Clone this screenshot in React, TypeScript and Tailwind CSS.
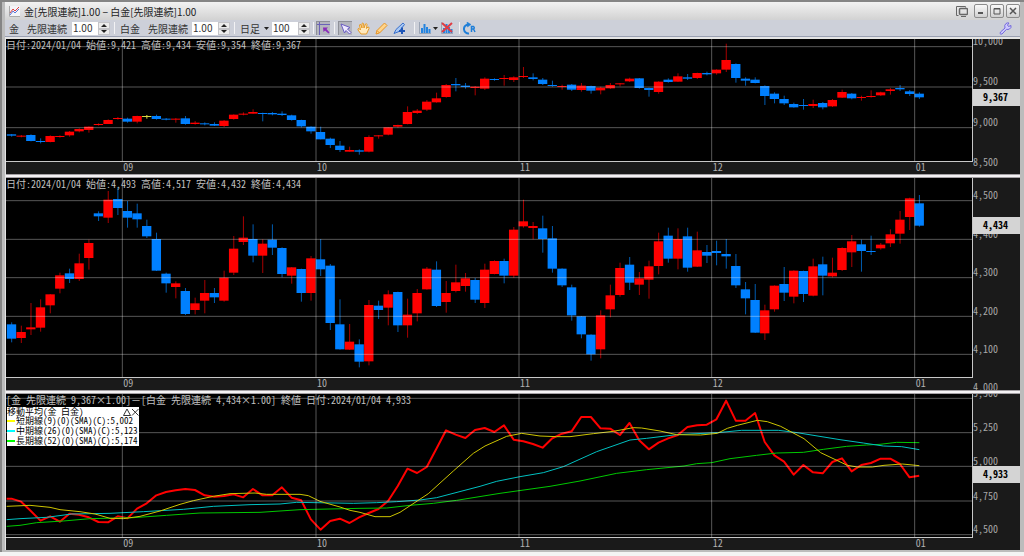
import type { ReactNode } from 'react';

type Candle = [string, number, number, number, number];
type Point = [number, number];

// Plot units: three per pixel at the default window width.
const PLOT_LEFT = 18;
const PLOT_WIDTH = 2898;

const candleX = (index: number) => 34.5 + index * 28.97;

const months = [
  { label: '09', x: 367 },
  { label: '10', x: 948 },
  { label: '11', x: 1557 },
  { label: '12', x: 2135 },
  { label: '01', x: 2744 },
];

// [colour, high, body top, body bottom, low]
const goldCandles: Candle[] = [
  ['b', 294, 295, 299, 302], ['r', 297, 299, 302, 304], ['b', 295, 297, 315, 316], ['b', 307, 315, 318, 322],
  ['r', 298, 300, 318, 319], ['r', 298, 300, 303, 305], ['r', 285, 287, 298, 302], ['r', 277, 279, 286, 289],
  ['r', 271, 272, 282, 290], ['r', 262, 264, 267, 269], ['r', 250, 252, 264, 264], ['r', 243, 246, 249, 251],
  ['b', 245, 248, 257, 260], ['r', 239, 240, 257, 262], ['y', 237, 240, 243, 248], ['b', 236, 240, 249, 251],
  ['b', 246, 248, 251, 253], ['r', 246, 248, 251, 260], ['b', 240, 247, 264, 266], ['r', 255, 260, 264, 266],
  ['b', 259, 262, 265, 268], ['b', 259, 264, 269, 270], ['r', 252, 254, 270, 273], ['r', 235, 236, 249, 251],
  ['r', 229, 233, 236, 238], ['r', 220, 228, 233, 233], ['b', 230, 231, 234, 256], ['b', 228, 231, 235, 238],
  ['b', 226, 233, 237, 240], ['b', 236, 238, 252, 254], ['b', 251, 252, 271, 274], ['b', 271, 272, 286, 293],
  ['b', 272, 288, 310, 310], ['b', 305, 308, 327, 336], ['b', 315, 329, 342, 348], ['r', 332, 342, 347, 347],
  ['b', 340, 343, 347, 356], ['r', 298, 303, 347, 349], ['r', 297, 298, 301, 308], ['r', 274, 274, 296, 298],
  ['r', 266, 267, 272, 275], ['r', 211, 228, 264, 265], ['r', 219, 224, 231, 234], ['r', 192, 197, 221, 225],
  ['r', 170, 187, 199, 200], ['r', 144, 147, 183, 185], ['b', 126, 144, 148, 166], ['b', 141, 149, 153, 158],
  ['r', 150, 152, 156, 178], ['r', 124, 128, 158, 162], ['b', 127, 129, 132, 134], ['r', 117, 126, 129, 149],
  ['r', 121, 124, 132, 138], ['r', 93, 120, 123, 126], ['b', 112, 124, 129, 133], ['b', 126, 131, 144, 147],
  ['b', 134, 147, 150, 152], ['r', 146, 150, 153, 161], ['b', 144, 146, 161, 165], ['r', 141, 149, 162, 167],
  ['b', 149, 150, 164, 173], ['r', 152, 155, 163, 175], ['r', 141, 147, 157, 159], ['r', 141, 142, 145, 151],
  ['r', 125, 128, 136, 138], ['b', 126, 127, 156, 158], ['b', 155, 156, 162, 182], ['r', 136, 137, 168, 173],
  ['b', 127, 131, 138, 140], ['r', 112, 121, 137, 138], ['b', 114, 124, 128, 132], ['r', 110, 111, 126, 129],
  ['b', 107, 111, 115, 118], ['r', 100, 101, 112, 116], ['r', 23, 72, 101, 108], ['b', 82, 84, 126, 140],
  ['b', 124, 128, 134, 149], ['b', 124, 131, 141, 142], ['b', 148, 150, 180, 207], ['b', 169, 173, 189, 202],
  ['b', 179, 189, 202, 207], ['b', 200, 204, 214, 215], ['b', 189, 207, 210, 221], ['r', 191, 204, 210, 216],
  ['b', 198, 201, 214, 220], ['r', 189, 192, 211, 213], ['r', 161, 168, 185, 186], ['b', 171, 173, 187, 190],
  ['r', 179, 183, 186, 194], ['r', 163, 180, 183, 185], ['r', 167, 169, 178, 180], ['r', 156, 160, 165, 176],
  ['b', 147, 156, 160, 165], ['b', 162, 166, 174, 180], ['b', 169, 173, 184, 189],
];

const platinumCandles: Candle[] = [
  ['b', 445, 451, 494, 505], ['r', 455, 474, 492, 507], ['r', 387, 460, 466, 483], ['r', 376, 400, 461, 473],
  ['r', 360, 361, 394, 418], ['r', 296, 304, 344, 358], ['b', 284, 298, 315, 327], ['r', 239, 268, 315, 321],
  ['r', 197, 207, 252, 287], ['b', 112, 118, 127, 141], ['r', 51, 77, 131, 147], ['b', 39, 75, 102, 123],
  ['b', 81, 111, 131, 161], ['b', 89, 118, 136, 161], ['b', 137, 156, 187, 192], ['b', 176, 195, 290, 291],
  ['b', 296, 299, 328, 356], ['r', 322, 328, 339, 373], ['b', 342, 351, 420, 423], ['r', 371, 388, 408, 421],
  ['r', 318, 357, 380, 418], ['b', 342, 357, 370, 387], ['r', 290, 311, 380, 383], ['r', 186, 224, 296, 303],
  ['r', 127, 191, 204, 213], ['b', 151, 195, 245, 265], ['r', 196, 209, 245, 297], ['b', 151, 197, 221, 243],
  ['b', 220, 222, 300, 310], ['r', 279, 280, 305, 329], ['b', 284, 285, 357, 383], ['r', 246, 253, 357, 380],
  ['b', 195, 256, 286, 306], ['b', 270, 275, 447, 468], ['b', 376, 451, 526, 527], ['r', 450, 503, 527, 528],
  ['b', 496, 511, 563, 580], ['r', 378, 393, 562, 574], ['b', 380, 395, 408, 435], ['r', 349, 361, 401, 454],
  ['b', 353, 354, 454, 474], ['r', 374, 422, 454, 491], ['r', 345, 357, 418, 442], ['r', 279, 284, 346, 347],
  ['b', 262, 287, 396, 399], ['r', 321, 357, 384, 416], ['r', 272, 325, 351, 355], ['r', 297, 313, 336, 353],
  ['b', 312, 318, 377, 387], ['r', 269, 287, 387, 402], ['r', 259, 261, 300, 301], ['b', 254, 261, 305, 328],
  ['r', 159, 167, 305, 311], ['r', 77, 142, 157, 161], ['r', 144, 156, 162, 196], ['b', 125, 163, 195, 236],
  ['b', 156, 193, 284, 296], ['b', 283, 284, 334, 339], ['b', 332, 340, 424, 440], ['b', 426, 427, 481, 493],
  ['b', 481, 482, 541, 560], ['r', 409, 424, 526, 553], ['r', 332, 364, 406, 430], ['r', 266, 282, 363, 368],
  ['b', 249, 272, 326, 348], ['r', 294, 313, 332, 363], ['r', 260, 277, 317, 374], ['r', 176, 202, 276, 301],
  ['b', 161, 185, 254, 266], ['r', 163, 195, 254, 286], ['b', 161, 187, 281, 293], ['r', 173, 229, 278, 279],
  ['b', 213, 234, 245, 267], ['b', 200, 231, 237, 274], ['b', 195, 240, 247, 284], ['b', 240, 276, 334, 342],
  ['b', 324, 346, 373, 421], ['b', 330, 378, 476, 477], ['r', 392, 409, 478, 498], ['r', 334, 335, 406, 413],
  ['b', 279, 330, 356, 381], ['r', 289, 290, 368, 388], ['b', 290, 291, 360, 384], ['r', 254, 277, 365, 367],
  ['b', 248, 271, 305, 364], ['r', 251, 296, 307, 310], ['r', 220, 222, 288, 291], ['r', 183, 202, 235, 279],
  ['b', 197, 211, 231, 293], ['b', 185, 231, 234, 243], ['r', 207, 212, 223, 227], ['r', 166, 181, 208, 219],
  ['r', 111, 137, 179, 209], ['r', 71, 73, 129, 168], ['b', 63, 88, 155, 158],
];

const spread = [
  338, 347, 375, 404, 391, 407, 383, 386, 394, 408, 409, 391, 397, 368, 352, 328, 318, 313, 309, 312, 328, 332, 330,
  325, 334, 309, 328, 328, 304, 335, 343, 400, 431, 405, 398, 411, 394, 381, 369, 345, 300, 248, 261, 243, 188, 133,
  146, 156, 132, 126, 138, 118, 161, 166, 174, 185, 157, 143, 136, 93, 93, 127, 128, 147, 111, 163, 190, 170, 157,
  147, 123, 118, 116, 100, 44, 104, 104, 81, 168, 208, 227, 266, 237, 259, 262, 228, 217, 256, 237, 231, 218, 218,
  234, 274, 269,
];

const shortAverage: Point[] = [
  [20, 361], [90, 358], [150, 364], [180, 371], [240, 377], [285, 384], [330, 397], [370, 398], [420, 391],
  [480, 375], [540, 355], [580, 344], [640, 331], [690, 323], [765, 321], [800, 325], [900, 325], [925, 329],
  [960, 346], [1020, 363], [1050, 373], [1080, 379], [1125, 392], [1170, 392], [1200, 379], [1285, 323],
  [1360, 255], [1420, 202], [1455, 180], [1520, 151], [1565, 142], [1620, 150], [1670, 152], [1710, 152],
  [1780, 143], [1840, 136], [1900, 125], [1925, 126], [1980, 135], [2030, 146], [2102, 147], [2152, 142],
  [2182, 127], [2212, 118], [2272, 103], [2302, 107], [2342, 121], [2412, 158], [2462, 200], [2542, 238],
  [2572, 243], [2617, 243], [2652, 238], [2707, 234], [2758, 239],
];

const middleAverage: Point[] = [
  [20, 401], [60, 398], [140, 394], [215, 384], [330, 382], [430, 377], [550, 370], [640, 361], [750, 356],
  [840, 354], [890, 349], [1060, 352], [1130, 350], [1190, 347], [1260, 342], [1310, 335], [1440, 301],
  [1490, 286], [1560, 272], [1630, 260], [1690, 242], [1790, 197], [1890, 162], [1940, 157], [2030, 146],
  [2152, 140], [2225, 133], [2335, 133], [2385, 139], [2520, 161], [2590, 171], [2650, 180], [2705, 182],
  [2758, 191],
];

const longAverage: Point[] = [
  [20, 421], [60, 418], [110, 410], [190, 405], [270, 398], [400, 395], [500, 388], [600, 381], [780, 379],
  [900, 371], [1080, 367], [1160, 366], [1230, 358], [1300, 352], [1370, 343], [1500, 322], [1650, 301],
  [1740, 285], [1850, 262], [1940, 251], [2052, 240], [2090, 233], [2135, 230], [2190, 218], [2270, 208],
  [2330, 201], [2410, 199], [2470, 190], [2540, 181], [2600, 177], [2640, 175], [2690, 169], [2758, 170],
];

const toPoints = (points: Point[]) => points.map((p) => p.join(',')).join(' ');

const bodyColor: Record<string, string> = { r: '#ff0000', b: '#0080ff', y: '#d8d840' };
const wickColor: Record<string, string> = { r: '#a80000', b: '#005cb0', y: '#d8d840' };

const Candles = ({ data }: { data: Candle[] }) => (
  <g>
    {data.map(([color, high, top, bottom, low], index) => (
      <g key={index}>
        <rect x={candleX(index) - 1} y={high} width={3} height={low - high} fill={wickColor[color]} />
        <rect x={candleX(index) - 14} y={top} width={28} height={bottom - top} fill={bodyColor[color]} />
      </g>
    ))}
  </g>
);

interface PaneProps {
  name: string;
  title: string;
  top: number;
  height: number;
  plotClass: string;
  grid: number[];
  ticks: { label: string; y: number }[];
  price: { label: string; y: number };
  legend?: ReactNode;
  children: ReactNode;
}

const Pane = ({ name, title, top, height, plotClass, grid, ticks, price, legend, children }: PaneProps) => (
  <section aria-label={name} className="flex overflow-hidden bg-[#1a1a1a]">
    <div className="min-w-0 flex-1">
      <div className={`relative border-r border-b border-[#c8c8c8] bg-black ${plotClass}`}>
        <svg
          className="block h-full w-full"
          viewBox={`${PLOT_LEFT} ${top} ${PLOT_WIDTH} ${height}`}
          preserveAspectRatio="none"
        >
          {children}
          <g stroke="#ffffff" strokeOpacity="0.34">
            {grid.map((y) => (
              <line key={y} x1={PLOT_LEFT} x2={PLOT_LEFT + PLOT_WIDTH} y1={y} y2={y} vectorEffect="non-scaling-stroke" />
            ))}
            {months.map((m) => (
              <line key={m.label} x1={m.x} x2={m.x} y1={top} y2={top + height} vectorEffect="non-scaling-stroke" />
            ))}
          </g>
        </svg>
        <div className="absolute top-0 left-0 text-[10px] leading-3 whitespace-pre text-[#c0c0c0]">{title}</div>
        {legend}
      </div>
      <div className="relative h-3 text-[10px] leading-[9px] text-[#b0b0b0]">
        {months.map((m) => (
          <span
            key={m.label}
            className="absolute top-0 pl-px"
            style={{ left: `${((m.x - PLOT_LEFT) / (PLOT_WIDTH + 3)) * 100}%` }}
          >
            {m.label}
          </span>
        ))}
      </div>
    </div>
    {/* Price scale */}
    <div className="relative w-[47px] shrink-0 overflow-hidden text-[10px] leading-3 text-[#a8a8a8]">
      {ticks.map((t) => (
        <span key={t.label} className="absolute left-0" style={{ top: t.y - 6 }}>
          {t.label}
        </span>
      ))}
      <strong
        className="absolute left-0 h-[17px] w-full bg-[#d4d4d4] pl-[10px] leading-4 font-bold text-black"
        style={{ top: price.y - 9 }}
      >
        {price.label}
      </strong>
    </div>
  </section>
);

const Divider = () => <div className="h-1 border-y border-[#a4a0a4] bg-[#f4f2f4]" />;

const Separator = () => <span className="h-3 w-px shrink-0 bg-[#f2f2f4]" />;

const Stepper = ({ id, value, label }: { id: string; value: string; label?: string }) => (
  <span className="flex h-[13px] shrink-0">
    <input
      id={id}
      aria-label={label}
      defaultValue={value}
      className="w-[26px] bg-white pl-px text-[10px] leading-3 text-[#333]"
    />
    <span className="flex w-3 flex-col">
      <button aria-label="増やす" className="flex h-[7px] items-center justify-center border border-[#c4c4c8] bg-[#ececec]">
        <svg width="6" height="3"><path d="M0 3L3 0L6 3Z" fill="#222" /></svg>
      </button>
      <button aria-label="減らす" className="flex h-[6px] items-center justify-center border border-[#c4c4c8] bg-[#ececec]">
        <svg width="6" height="3"><path d="M0 0L3 3L6 0Z" fill="#222" /></svg>
      </button>
    </span>
  </span>
);

const ToolButton = ({ label, pressed, children }: { label: string; pressed?: boolean; children: ReactNode }) => (
  <button
    aria-label={label}
    className={`flex size-[14px] shrink-0 items-center justify-center ${pressed ? 'border-t border-l border-[#8e9098] bg-[#b4b6be]' : ''}`}
  >
    {children}
  </button>
);

const Bars = () => (
  <>
    <path d="M0.500 0V11.500H12" stroke="#9aa4b4" fill="none" />
    <path d="M2 6h2v5H2zM4.500 2h2v9h-2zM7 5h2v6H7zM9.500 7h2v4h-2z" fill="#2484e0" />
  </>
);

const legendRows = [
  { text: '短期線(9)(0)(SMA)(C):5,002', swatch: 'bg-[#ffff00]' },
  { text: '中期線(26)(0)(SMA)(C):5,123', swatch: 'bg-[#00ffff]' },
  { text: '長期線(52)(0)(SMA)(C):5,174', swatch: 'bg-[#00ff00]' },
];

const Legend = () => (
  <div className="absolute top-[13px] left-px w-[132px] bg-white text-[9px] leading-[10px] font-medium whitespace-pre text-black">
    <div className="flex h-[9px] items-center justify-between">
      <span>移動平均(金 白金)</span>
      <span className="flex">
        <button aria-label="折りたたむ">
          <svg className="block" width="8" height="8" fill="none" stroke="#333"><path d="M0.500 7.500L4 1L7.500 7.500Z" /></svg>
        </button>
        <button aria-label="閉じる">
          <svg className="block" width="8" height="8" fill="none" stroke="#333"><path d="M1 1L7.500 7.500M7.500 1L1 7.500" /></svg>
        </button>
      </span>
    </div>
    {legendRows.map((row) => (
      <div key={row.text} className="flex h-[10px] items-center">
        <span className={`mr-px h-[2px] w-2 shrink-0 ${row.swatch}`} />
        {row.text}
      </div>
    ))}
  </div>
);

const windowButton =
  'flex size-[14px] items-center justify-center rounded-[2px] border border-[#8c8c8c] bg-gradient-to-b from-[#fafafa] to-[#d0d0d0]';

const App = () => (
  <main className="min-h-screen bg-[#f4f4f4] font-['Noto_Sans_CJK_JP',sans-serif] text-[10px] leading-[15px] text-[#333]">
    <div className="border-t-2 border-l-2 border-[#858585]">
      <div className="border-r-4 border-b-2 border-l-[3px] border-[#bcbcbc]">
        {/* Title bar */}
        <header className="flex h-[18px] items-center bg-gradient-to-b from-[#f2f2f2] to-[#d2d2d2] pl-1">
          <svg width="11" height="11" className="mr-1 shrink-0" fill="none">
            <rect x="0" y="0" width="11" height="11" fill="#f4f4f8" />
            <path d="M0.500 0V10.500H11" stroke="#aaa" />
            <path d="M1 9L4 5L6 7L10 3" stroke="#5a78d8" />
            <path d="M1 7L4 3L6 5L10 1" stroke="#e04040" />
          </svg>
          <h1 className="flex-1 whitespace-pre text-[#222]">金[先限連続]1.00 − 白金[先限連続]1.00</h1>
          <div className="flex items-center gap-[2px]">
            <button aria-label="ウィンドウ切替" className="mr-1">
              <svg width="12" height="12" fill="none" stroke="#666" className="block">
                <path d="M2.500 10.500H0.500V1.500H9.500V2.500" />
                <rect x="3.500" y="3.500" width="8" height="6" rx="1" strokeWidth="1.500" />
                <path d="M5 11.500H10" />
              </svg>
            </button>
            <button aria-label="最小化" className={windowButton}>
              <svg width="8" height="8"><path d="M1 6h5" stroke="#555" strokeWidth="2" /></svg>
            </button>
            <button aria-label="最大化" className={windowButton}>
              <svg width="8" height="8" fill="none" stroke="#555"><path d="M1 1.500h6v5.500H1zM1 2h6" /></svg>
            </button>
            <button aria-label="閉じる" className={windowButton}>
              <svg width="8" height="8" stroke="#555" strokeWidth="1.500"><path d="M1 1L7 7M7 1L1 7" /></svg>
            </button>
          </div>
        </header>

        {/* Toolbar */}
        <div className="flex h-[17px] items-center border-b border-[#9aa0b2] bg-[#cdd0d9] pr-1 pl-1">
          <span>金</span>
          <label htmlFor="gold-rate" className="mr-[5px] ml-2 whitespace-nowrap">先限連続</label>
          <Stepper id="gold-rate" value="1.00" />
          <span className="ml-1 flex"><Separator /></span>
          <span className="ml-[5px] whitespace-nowrap">白金</span>
          <label htmlFor="platinum-rate" className="mr-1 ml-2 whitespace-nowrap">先限連続</label>
          <Stepper id="platinum-rate" value="1.00" />
          <span className="ml-1 flex"><Separator /></span>
          <button className="mr-[3px] ml-[5px] flex items-center gap-1 whitespace-nowrap">
            日足
            <svg width="5" height="3"><path d="M0 0h5L2.500 3Z" fill="#222" /></svg>
          </button>
          <Stepper id="bar-count" value="100" label="本数" />
          <span className="mr-[2px] ml-[3px] flex"><Separator /></span>
          <ToolButton label="四本値表示" pressed>
            <svg width="13" height="13" fill="none">
              <path d="M0 2.500H13M2.500 0V13" stroke="#6a62b8" />
              <path d="M6 5.500h5L9.500 7l3 3.500-1 1L8 8.500 6.500 10Z" fill="#8a2cb8" />
            </svg>
          </ToolButton>
          <span className="mr-[3px] ml-1 flex"><Separator /></span>
          <div className="flex gap-1">
            <ToolButton label="選択" pressed>
              <svg width="12" height="12"><path d="M1 1L10 4.500L7.500 6L11 9.500L9.500 11L6 7.500L4.500 10Z" fill="#eeeaff" stroke="#6a5cc4" /></svg>
            </ToolButton>
            <ToolButton label="移動">
              <svg width="13" height="13" fill="#ffe9bd" stroke="#e59a28" strokeLinejoin="round">
                <path d="M4 12L1 8Q0.500 6.500 2 6.500L3.500 8L2.500 3Q3 1.500 4 3L5 6L5 1.500Q6 0.500 6.500 1.500L7 6L8.500 2Q9.500 1 10 2.500L9.500 6.500L11 5Q12.500 5 12 6.500L9.500 12Z" />
              </svg>
            </ToolButton>
            <ToolButton label="描画">
              <svg width="13" height="13" fill="#ffd48a" stroke="#e59428"><path d="M1 12L2 8.500L9.500 1L12 3.500L4.500 11Z" /><path d="M2 8.500L4.500 11" /></svg>
            </ToolButton>
            <ToolButton label="描画追加">
              <svg width="13" height="13" fill="#a8c8f4" stroke="#3a70cc"><path d="M1 11.500L3 7.500L10 1L11.500 2.500L6 9.500Z" /><path d="M9 5.500V12M6 9H12" stroke="#1f56b8" strokeWidth="2" /></svg>
            </ToolButton>
          </div>
          <span className="mr-1 ml-2 flex"><Separator /></span>
          <button aria-label="チャート種類" className="mr-[2px] flex items-center gap-[2px]">
            <svg width="12" height="12"><Bars /></svg>
            <svg width="5" height="3"><path d="M0 0h5L2.500 3Z" fill="#222" /></svg>
          </button>
          <ToolButton label="指標削除">
            <svg width="12" height="12"><Bars /><path d="M1 1L11 10M11 1L1 10" stroke="#e03c44" strokeWidth="2" /></svg>
          </ToolButton>
          <span className="mr-[2px] ml-[5px] flex"><Separator /></span>
          <ToolButton label="リセット">
            <svg width="13" height="13" fill="none" stroke="#1e7ed8" strokeWidth="2">
              <path d="M6 11.500A4.500 4.500 0 1 1 5 2.500" />
              <path d="M4 0L8 2.500L4.500 5Z" fill="#1e7ed8" strokeWidth="0.500" />
              <path d="M8.500 10V4.500H10.500Q12 5.500 10.500 7H9M10.500 7L12 10" strokeWidth="1.500" />
            </svg>
          </ToolButton>
          <span className="flex-1" />
          <span className="mr-1 flex">
            <ToolButton label="設定">
              <svg width="13" height="13" fill="#cfcaff" stroke="#7368dc">
                <path d="M1.500 10L6 6Q5 3 7 1.500Q8.500 0.500 10 1L8.500 3L9.500 4.500L12 3.500Q12.500 6 10.500 7Q9 7.800 7.500 7.300L3 12Q1.500 12.500 1 11.500Z" />
              </svg>
            </ToolButton>
          </span>
        </div>

        {/* Charts */}
        <div className="border-t-2 border-l border-[#e4e4e4] font-['Noto_Sans_Mono_CJK_JP','Noto_Sans_CJK_JP',monospace]">
          <Pane
            name="金"
            title="日付:2024/01/04 始値:9,421 高値:9,434 安値:9,354 終値:9,367"
            top={9}
            height={366}
            plotClass="h-[123px]"
            grid={[32, 153, 275]}
            ticks={[{ label: '10,000', y: 2 }, { label: '9,500', y: 42 }, { label: '9,000', y: 83 }, { label: '8,500', y: 123 }]}
            price={{ label: '9,367', y: 59 }}
          >
            <Candles data={goldCandles} />
          </Pane>
          <Divider />
          <Pane
            name="白金"
            title="日付:2024/01/04 始値:4,493 高値:4,517 安値:4,432 終値:4,434"
            top={12}
            height={597}
            plotClass="h-[200px]"
            grid={[80, 196, 311, 427, 541]}
            ticks={[
              { label: '4,500', y: 17 },
              { label: '4,400', y: 56 },
              { label: '4,300', y: 94 },
              { label: '4,200', y: 133 },
              { label: '4,100', y: 171 },
              { label: '4,000', y: 209 },
            ]}
            price={{ label: '4,434', y: 48 }}
          >
            <Candles data={platinumCandles} />
          </Pane>
          <Divider />
          <Pane
            name="金 − 白金"
            title="[金 先限連続 9,367×1.00]－[白金 先限連続 4,434×1.00] 終値 日付:2024/01/04 4,933"
            top={24}
            height={429}
            plotClass="h-[144px]"
            grid={[37, 140, 241, 345, 446]}
            ticks={[
              { label: '5,500', y: -1 },
              { label: '5,250', y: 33 },
              { label: '5,000', y: 67 },
              { label: '4,750', y: 102 },
              { label: '4,500', y: 135 },
            ]}
            price={{ label: '4,933', y: 81 }}
            legend={<Legend />}
          >
            <g fill="none" strokeLinejoin="round">
              <polyline
                points={toPoints([[20, 338], ...spread.map((y, i): Point => [candleX(i), y])])}
                stroke="#ff0000"
                strokeWidth="2"
                vectorEffect="non-scaling-stroke"
              />
              <polyline points={toPoints(longAverage)} stroke="#00c800" vectorEffect="non-scaling-stroke" />
              <polyline points={toPoints(middleAverage)} stroke="#00c0c0" vectorEffect="non-scaling-stroke" />
              <polyline points={toPoints(shortAverage)} stroke="#ccc400" vectorEffect="non-scaling-stroke" />
            </g>
          </Pane>
        </div>
      </div>
    </div>
  </main>
);

export default App;
